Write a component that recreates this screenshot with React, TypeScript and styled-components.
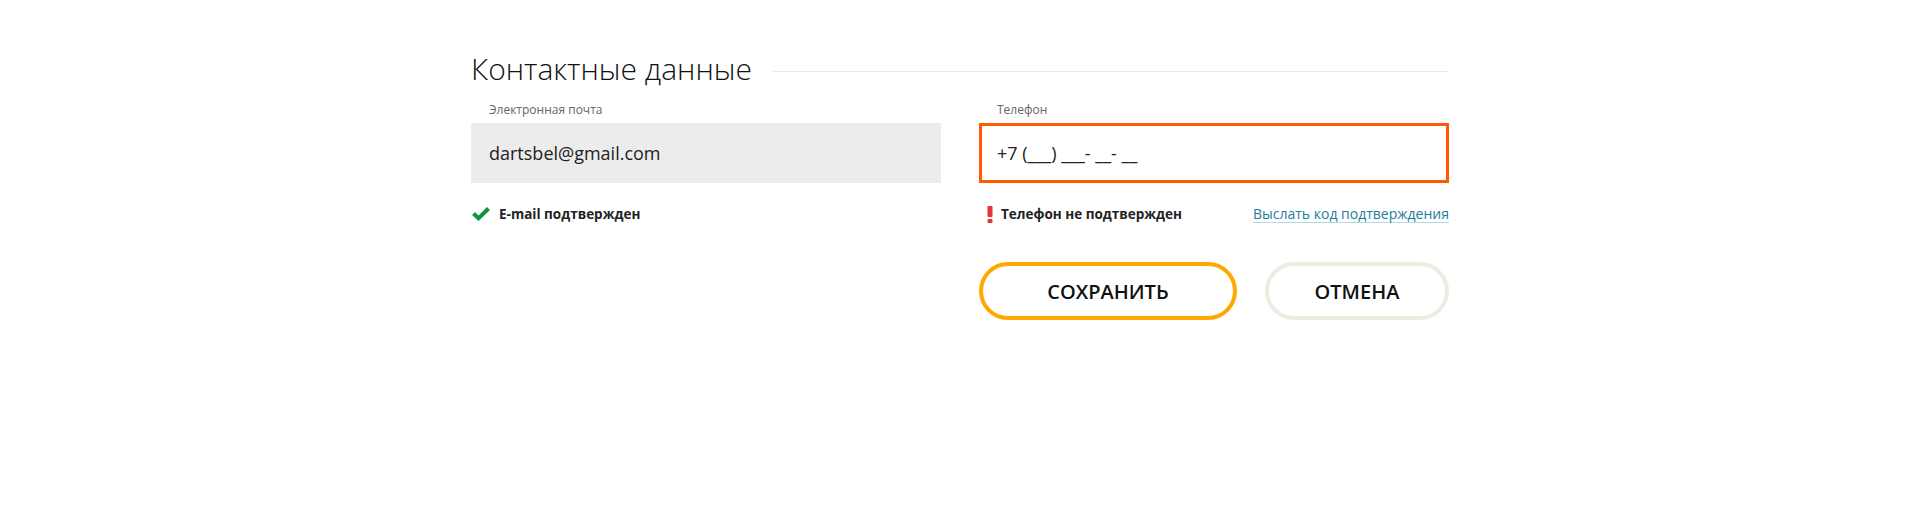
import styled, { createGlobalStyle } from 'styled-components';

const GlobalStyle = createGlobalStyle`
  html, body {
    margin: 0;
    padding: 0;
    background: #fff;
    font-family: "Open Sans", "Liberation Sans", sans-serif;
    color: #222;
  }
`;

const Page = styled.div`
  width: 978px;
  margin: 0 auto;
  padding-top: 49px;
`;

const Header = styled.div`
  display: flex;
  align-items: center;
  height: 40px;
`;

const Title = styled.h2`
  margin: 0;
  font-size: 30px;
  font-weight: 300;
  line-height: 40px;
  color: #111;
  white-space: nowrap;
`;

const Rule = styled.div`
  flex: 1;
  height: 1px;
  margin-left: 21px;
  margin-top: 4px;
  background: #ebe9e4;
`;

const Grid = styled.div`
  display: grid;
  grid-template-columns: 470px 470px;
  column-gap: 38px;
  margin-top: 13px;
`;

const Field = styled.div`
  display: flex;
  flex-direction: column;
`;

const Label = styled.label`
  font-size: 12px;
  line-height: 16px;
  color: #666;
  padding-left: 18px;
  margin-bottom: 5px;
`;

const Input = styled.div<{ $active?: boolean }>`
  box-sizing: border-box;
  height: 60px;
  display: flex;
  align-items: center;
  padding-left: ${p => (p.$active ? '15px' : '18px')};
  font-size: 18px;
  color: #222;
  background: ${p => (p.$active ? '#fff' : '#ececec')};
  border: ${p => (p.$active ? '3px solid #ff5a00' : 'none')};
`;

const Status = styled.div`
  display: flex;
  align-items: center;
  justify-content: space-between;
  height: 18px;
  margin-top: 22px;
`;

const Note = styled.div`
  display: flex;
  align-items: center;
  font-size: 13.5px;
  font-weight: 700;
  color: #222;
`;

const Icon = styled.span<{ $w: number; $ml?: number; $mr: number }>`
  display: inline-flex;
  width: ${p => p.$w}px;
  margin-left: ${p => p.$ml || 0}px;
  margin-right: ${p => p.$mr}px;
  svg { display: block; }
`;

const Link = styled.a`
  font-size: 14px;
  line-height: 17px;
  color: #1e7d9b;
  text-decoration: none;
  border-bottom: 1px solid #b3d8e4;
  cursor: pointer;
`;

const Actions = styled.div`
  display: flex;
  gap: 28px;
  margin-top: 39px;
`;

const Button = styled.button<{ $primary?: boolean; $w: number }>`
  box-sizing: border-box;
  width: ${p => p.$w}px;
  height: 58px;
  border-radius: 29px;
  border: 4px solid ${p => (p.$primary ? '#ffa800' : '#eeebe3')};
  background: #fff;
  font-family: inherit;
  font-size: 20px;
  font-weight: 600;
  text-transform: uppercase;
  color: #111;
  cursor: pointer;
`;

const App = () => {
  return (
    <Page>
      <GlobalStyle />
      <Header>
        <Title>Контактные данные</Title>
        <Rule />
      </Header>
      <Grid>
        <div>
          <Field>
            <Label>Электронная почта</Label>
            <Input>dartsbel@gmail.com</Input>
          </Field>
          <Status>
            <Note>
              <Icon $w={20} $mr={8}>
                <svg width="20" height="16" viewBox="0 0 20 16">
                  <path d="M1 9 L4 6 L7.5 9.5 L16 1 L19 4 L7.5 15 Z" fill="#13923f" />
                </svg>
              </Icon>
              E-mail подтвержден
            </Note>
          </Status>
        </div>
        <div>
          <Field>
            <Label>Телефон</Label>
            <Input $active>+7 (___) ___- __- __</Input>
          </Field>
          <Status>
            <Note>
              <Icon $w={6} $ml={8} $mr={8}>
                <svg width="6" height="17" viewBox="0 0 6 17">
                  <rect x="0.5" y="0" width="5" height="11" rx="1" fill="#e5343c" />
                  <rect x="0.5" y="13" width="5" height="4" rx="1" fill="#e5343c" />
                </svg>
              </Icon>
              Телефон не подтвержден
            </Note>
            <Link>Выслать код подтверждения</Link>
          </Status>
          <Actions>
            <Button $primary $w={258}>Сохранить</Button>
            <Button $w={184}>Отмена</Button>
          </Actions>
        </div>
      </Grid>
    </Page>
  );
};

export default App;
